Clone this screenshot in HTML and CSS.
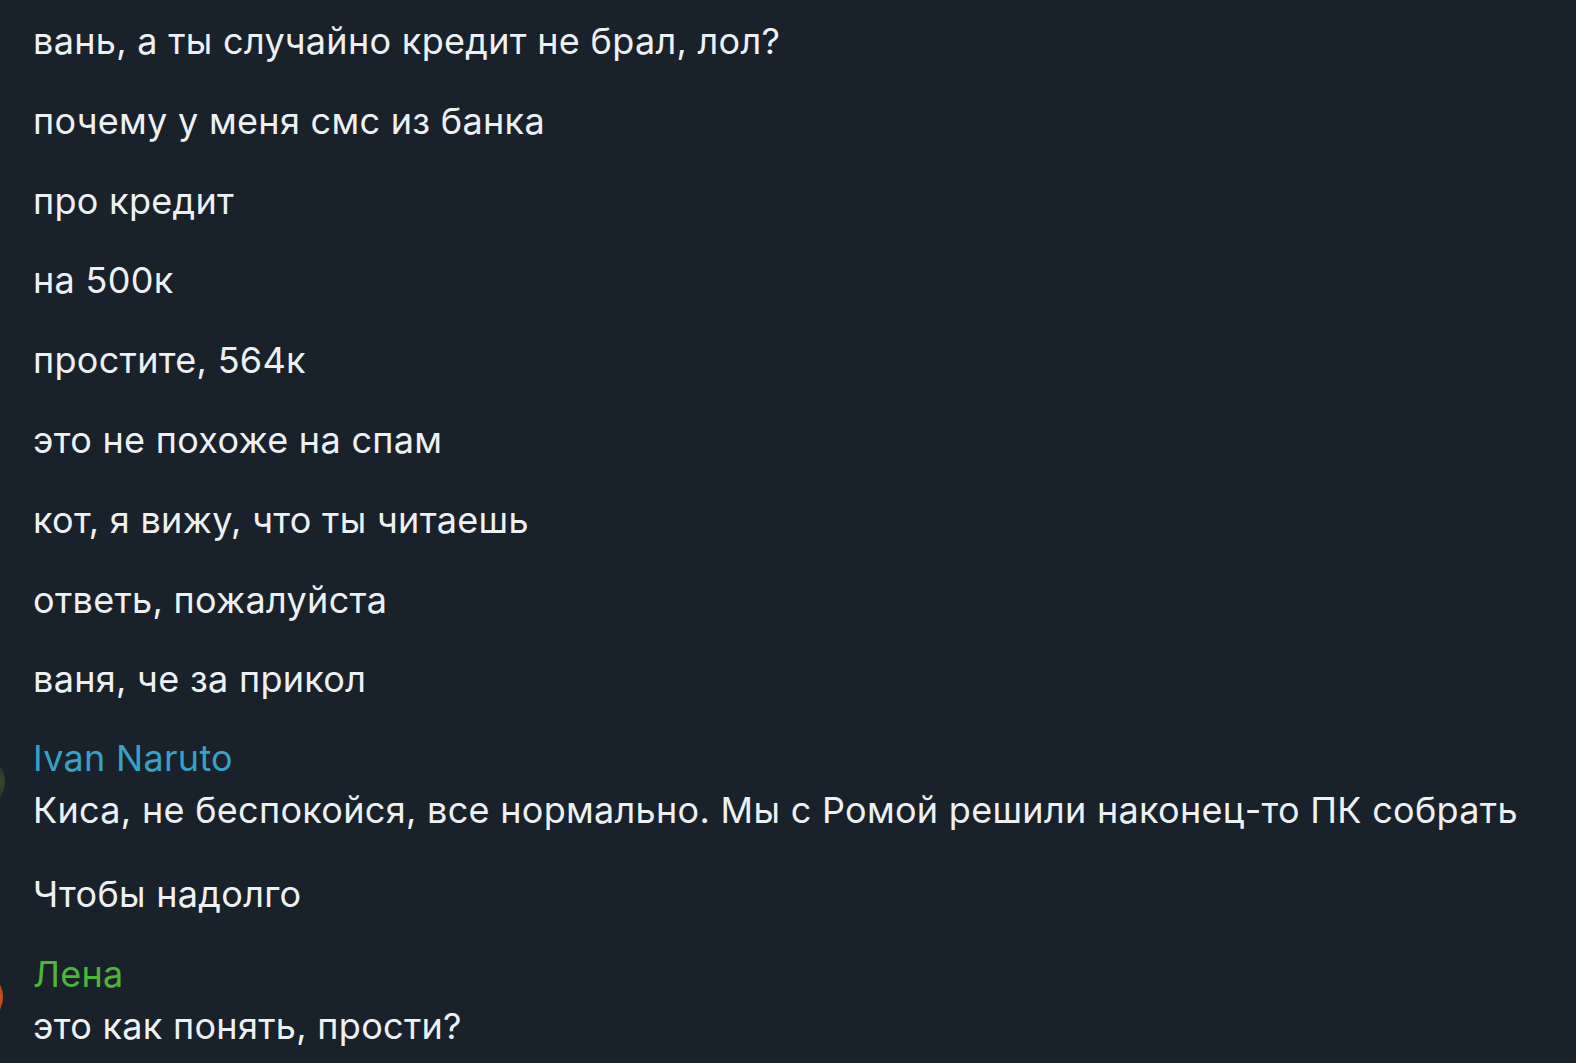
FILE: index.html
```html
<!DOCTYPE html>
<html lang="ru">
<head>
<meta charset="utf-8">
<link rel="stylesheet" href="styles.css">
</head>
<body>
<div class="chat">
  <div class="msg">вань, а ты случайно кредит не брал, лол?</div>
  <div class="msg">почему у меня смс из банка</div>
  <div class="msg">про кредит</div>
  <div class="msg">на 500к</div>
  <div class="msg">простите, 564к</div>
  <div class="msg">это не похоже на спам</div>
  <div class="msg">кот, я вижу, что ты читаешь</div>
  <div class="msg">ответь, пожалуйста</div>
  <div class="msg">ваня, че за прикол</div>
  <div class="group group-ivan">
    <span class="avatar avatar-ivan"></span>
    <div class="name name-blue">Ivan Naruto</div>
    <div class="msg">Киса, не беспокойся, все нормально. Мы с Ромой решили наконец-то ПК собрать</div>
  </div>
  <div class="msg">Чтобы надолго</div>
  <div class="group group-lena">
    <span class="avatar avatar-lena"></span>
    <div class="name name-green">Лена</div>
    <div class="msg">это как понять, прости?</div>
  </div>
</div>
</body>
</html>
```

FILE: styles.css
```css
html, body {
  margin: 0;
  padding: 0;
  background: #19212b;
  overflow: hidden;
}
body {
  width: 1576px;
  height: 1063px;
  font-family: Inter, "Noto Sans", "Liberation Sans", sans-serif;
  color: #eef1f4;
}
.chat {
  display: flex;
  flex-direction: column;
  gap: 39.8px;
  padding: 21px 0 0 33px;
}
.msg,
.name {
  font-size: 36px;
  line-height: 40px;
  letter-spacing: 0.3px;
  white-space: nowrap;
}
.group {
  position: relative;
  display: flex;
  flex-direction: column;
  gap: 12.3px;
}
.group-ivan {
  margin-top: -1.4px;
  padding-bottom: 4.6px;
}
.group-lena {
  margin-top: -0.4px;
}
.name-blue { color: #37a2c6; }
.name-green { color: #4cb735; }
.avatar {
  position: absolute;
  border-radius: 50%;
}
.avatar-ivan {
  left: -84px;
  top: 16px;
  width: 56px;
  height: 56px;
  background: radial-gradient(circle at 92% 50%, #3a4430 0%, #262e22 35%, #1c2421 70%);
}
.avatar-lena {
  left: -86px;
  top: 15px;
  width: 56px;
  height: 56px;
  background: radial-gradient(circle at 96% 50%, #c9501a 0%, #a8400f 30%, #5a2410 75%);
}
```
